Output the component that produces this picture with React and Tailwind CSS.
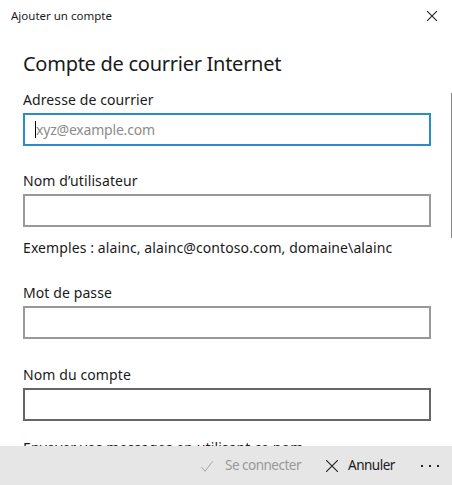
import React from "react";

const font = { fontFamily: '"Noto Sans", "Open Sans", sans-serif' };

function Label({ children, className = "" }) {
  return (
    <div className={`text-[14px] leading-[20px] h-[20px] tracking-[0.1px] text-[#1a1a1a] whitespace-nowrap ${className}`}>
      {children}
    </div>
  );
}

function Input({ borderClass, placeholder, focused, h = "h-[33px]" }) {
  return (
    <div className={`mt-[3px] ${h} w-[408px] border-2 ${borderClass} flex items-center pl-[11px] relative`}>
      {focused && <div className="w-px h-[17px] bg-black absolute left-[10px] top-[6px]" />}
      {placeholder && (
        <span className="text-[14px] text-[#8c8c8c] leading-none tracking-[-0.2px]">{placeholder}</span>
      )}
    </div>
  );
}

export default function App() {
  return (
    <div className="w-[452px] h-[485px] bg-white flex flex-col overflow-hidden relative" style={font}>
      <div className="h-[30px] flex items-center justify-between pl-[11px] pr-[15px] shrink-0">
        <span className="text-[11.5px] text-[#1a1a1a] mt-[1px]">Ajouter un compte</span>
        <svg width="10" height="10" viewBox="0 0 10 10" className="mt-[1px]">
          <path d="M0 0 L10 10 M10 0 L0 10" stroke="#222" strokeWidth="1.1" />
        </svg>
      </div>
      <div className="flex-1 overflow-hidden pl-[23px] relative">
        <div className="absolute right-0 top-[63px] w-px h-[145px] bg-[#8a8a8a]" />
        <div className="text-[20px] leading-[28px] h-[28px] tracking-[-0.27px] text-[#1a1a1a] mt-[20px] whitespace-nowrap">
          Compte de courrier Internet
        </div>
        <div className="mt-[12px] flex flex-col">
          <Label>Adresse de courrier</Label>
          <Input borderClass="border-[#2b8ccb]" placeholder="xyz@example.com" focused />
          <Label className="mt-[25px]">Nom d’utilisateur</Label>
          <Input borderClass="border-[#999999]" />
          <Label className="mt-[11px]">Exemples : alainc, alainc@contoso.com, domaine\alainc</Label>
          <Label className="mt-[25px]">Mot de passe</Label>
          <Input borderClass="border-[#999999]" />
          <Label className="mt-[26px]">Nom du compte</Label>
          <Input borderClass="border-[#666666]" />
          <Label className="mt-[17px]">Envoyer vos messages en utilisant ce nom</Label>
        </div>
      </div>
      <div className="h-[39px] bg-[#e6e6e6] flex items-center shrink-0 pl-[201px]">
        <svg width="12" height="11" viewBox="0 0 12 11" className="mt-[1px]">
          <path d="M0.4 5.8 L4 10.3 L11.6 0.4" fill="none" stroke="#a6a6a6" strokeWidth="1" />
        </svg>
        <span className="ml-[12px] text-[13.5px] text-[#999999] tracking-[-0.5px] whitespace-nowrap">Se connecter</span>
        <svg width="12" height="12" viewBox="0 0 12 12" className="ml-[25px] mt-[1px]">
          <path d="M0 0 L12 12 M12 0 L0 12" stroke="#222" strokeWidth="1.1" />
        </svg>
        <span className="ml-[10px] text-[13.5px] text-[#1a1a1a] tracking-[-0.5px] whitespace-nowrap">Annuler</span>
        <div className="flex items-center gap-[6px] ml-[26px] mt-[1px]">
          <div className="w-[2px] h-[2px] bg-[#222]" />
          <div className="w-[2px] h-[2px] bg-[#222]" />
          <div className="w-[2px] h-[2px] bg-[#222]" />
        </div>
      </div>
    </div>
  );
}
